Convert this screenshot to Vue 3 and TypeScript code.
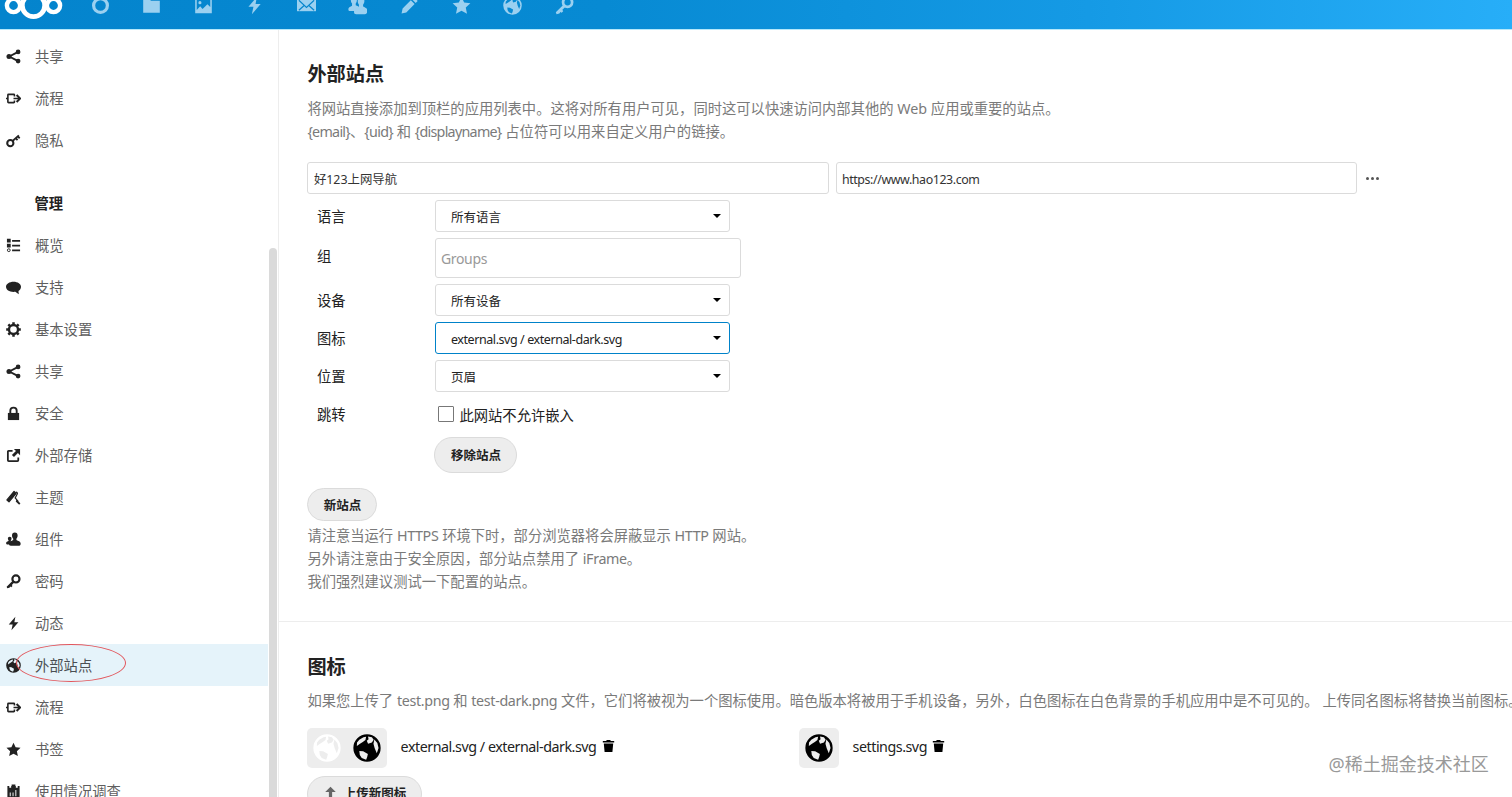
<script setup lang="ts">
import { ref } from 'vue'

interface NavItem {
  icon: string
  label: string
  active?: boolean
}

const icons: Record<string, string> = {
  circle:
    '<circle cx="8" cy="8" r="5.8" fill="none" stroke="currentColor" stroke-width="2.7"/>',
  folder: '<path d="M1 2h5l1.5 2H15v10H1z"/>',
  image:
    '<path fill-rule="evenodd" d="M1 1.5h14v13H1zM2.3 2.8v8.9l2.9-3 2 2.2 4.1-4 2.4 2.4V2.8zM5 4.3a1.3 1.3 0 1 1 0 2.6 1.3 1.3 0 0 1 0-2.6z"/>',
  bolt: '<path d="M10 0.8 2.9 9h4.2L5.8 15.3 13.2 6.7H8.9z"/>',
  mail:
    '<path d="M0 2.7h16v10.1H0z"/><path d="M1.6 3.6 8 9.6l6.4-6M1.6 12 6 8M14.4 12 10 8" fill="none" stroke="#0585cd" stroke-width="1"/>',
  users:
    '<path d="M5 .6c1.8 0 2.5 1.2 2.5 2.8 0 1.3-.4 2.2-1 2.900v1.500l2 .8c1 .5.5 2.400.5 4H2c-1.500 0-1.800-.6-1.600-2 .2-1.100 1.600-1.400 3-2.300V6.300c-.7-.7-1-1.700-1-2.900C2.400 1.800 3.200.6 5 .6z"/><path d="M11 1.300c2 0 2.800 1.300 2.800 3 0 1.300-.4 2.300-1.100 3v1.500c1.700 1 3.400 1.200 3.600 3.200.1 2-.6 3.300-2 3.300H7c-1.600 0-2.100-.9-1.900-2.500.2-1.900 2.300-2.200 4.100-4V7.300c-.7-.7-1-1.700-1-3 0-1.700.9-3 2.800-3z"/>',
  pencil:
    '<path d="m11.700 1 3.200 3.200-1.700 1.700L10 2.700zM9.100 3.600l3.200 3.200-7 7L1.300 14.700l.9-4.200z"/>',
  star: '<path d="m8 .7 2.250 4.850 5.250.6-3.900 3.600 1.050 5.300L8 12.400l-4.650 2.650 1.050-5.300L.5 6.150l5.250-.6z"/>',
  globe:
    '<path fill-rule="evenodd" d="M8 .2a7.800 7.800 0 1 0 0 15.600A7.800 7.800 0 0 0 8 .2zM3.600 3.300 6 1.800l1.500-.3-.4 1.900-1.500 1.200-1.600 1L2.200 6.800l.1-1.900zM8.600 1.400l2.200.4 1 1.500-1 1.600-2.200.6-.7-1.700 1-.8zM12.200 3.200 13.900 5.200l.7 2.800-1 3-1.200-2.800-.7-2.600zM3.600 9.700l2.200.1 2.700 1.600-.4 1.800-.6 1.500-2.500-1L3.900 12z"/>',
  key:
    '<circle cx="10.600" cy="5.300" r="3.800" fill="none" stroke="currentColor" stroke-width="2.300"/><path d="m7.100 7.300 1.800 1.800-2.700 2.500.7 1.300-1.300 1.100-1.100-.6-.8 1.300-2.400.6-.6-1.600z"/>',
  share:
    '<path d="M13 3 3.500 8l9.500 5" fill="none" stroke="currentColor" stroke-width="2"/><circle cx="3.200" cy="8" r="2.700"/><circle cx="12.900" cy="3.100" r="2.500"/><circle cx="12.900" cy="12.900" r="2.500"/>',
  flow:
    '<path d="M9 5.800V4.300Q9 3.600 8.300 3.600H2.700Q2 3.600 2 4.300v7.400q0 .7.700.7h5.600q.7 0 .7-.7V10.200M0 8h2M8 8h6.500" fill="none" stroke="currentColor" stroke-width="1.700"/><path d="m11.300 4.300 3.700 3.700-3.700 3.700" fill="none" stroke="currentColor" stroke-width="2.100"/>',
  smallkey:
    '<circle cx="4.600" cy="10.800" r="3.300" fill="none" stroke="currentColor" stroke-width="2.200"/><path d="m7 8.500 6.700-6M10.400 5.400l1.900 2.100M12.600 3.600l2 2" fill="none" stroke="currentColor" stroke-width="1.900"/>',
  list:
    '<path d="M1 .9h4v4H1zM1 6h4v4H1zM6.500 2.200H15V4H6.500zM6.500 7.200H15V9H6.500zM6.500 12.300H15V14H6.500z"/><circle cx="3" cy="13" r="1.500" fill="none" stroke="currentColor" stroke-width="1"/>',
  chat:
    '<path d="M8 1.800c4.600 0 8 2.300 8 5.500 0 2.100-1.100 3.500-2.700 4.500l.3 3.400-3.700-2.600C4.200 13.200 0 11 0 7.300c0-3.200 3.700-5.500 8-5.500z"/>',
  gear:
    '<circle cx="8" cy="8" r="4.800" fill="none" stroke="currentColor" stroke-width="2.500"/><path d="M8 .2v3M8 12.800v3M.2 8h3M12.800 8h3M2.500 2.500l2.100 2.100M11.400 11.400l2.100 2.100M13.500 2.500l-2.100 2.100M4.600 11.400l-2.100 2.100" stroke="currentColor" stroke-width="2.700"/>',
  lock:
    '<path d="M2 7.400h12V15H2z"/><path d="M4.600 7.800V5.100a3.400 3.400 0 0 1 6.800 0v2.700" fill="none" stroke="currentColor" stroke-width="2"/>',
  external:
    '<path d="M7 3H2.800Q2 3 2 3.900v9.200q0 .9.900.9h9.300q.9 0 .9-.9V10" fill="none" stroke="currentColor" stroke-width="1.900"/><path d="M8.400 1H15v6.700l-2.300-2.300-4.200 4.100-2.200-2.100 4.300-4.200z"/>',
  brush:
    '<path d="M8.600 1.600 10.800 3.600 3.200 12.600 1 10.600z" stroke="currentColor" stroke-width="1.300" stroke-linejoin="round"/><path d="M10.500 2.300q2.300.3 1.500 2L9.800 8.400l3.400 4" fill="none" stroke="currentColor" stroke-width="1.300"/><path d="m11 10.500 4.400 3.700-1.400 1.500-3.600-3.500z"/>',
  group:
    '<path d="M9.400.6c2 0 3 1.300 3 3.200 0 1.500-.5 2.500-1.300 3.300v1.500c2 1.100 4.200 1.400 4.500 3.400.2 1.900-.8 2.700-2.200 2.700H5.200c-1.500 0-2.300-.9-2-2.700.3-1.900 2.500-2.300 4.500-3.400V7.100C6.900 6.300 6.400 5.300 6.400 3.800c0-1.900 1-3.200 3-3.200z"/><path d="M4 5c1.300 0 1.900.8 1.900 2 0 .9-.2 1.400-.7 1.900v1L3 13.200H1.200C.2 13.200 0 12.400.2 11.500c.2-1.100 1.400-1.200 2.500-1.800v-.8C2.200 8.400 2 7.900 2 7c0-1.200.7-2 2-2z"/>',
  clipboard:
    '<path fill-rule="evenodd" d="M1.500 2h2v2h2V2H6V.5h4V2h.500v2h2V2h2v13h-13zM4 7v6h1V9H4zM7 9v4h1V9zM10 6.500V13h1V6.500z"/>',
  trash: '<path d="M5.800.5h4.400l.6 1.200h4.200v2H1v-2h4.200zM2.200 5h11.600l-1 10.500H3.200z"/>',
  upload: '<path d="m8 1 6.500 6.500H10V15H6V7.500H1.500z"/>',
}

const apps: string[] = ['circle', 'folder', 'image', 'bolt', 'mail', 'users', 'pencil', 'star', 'globe', 'key']

const personal: NavItem[] = [
  { icon: 'share', label: '共享' },
  { icon: 'flow', label: '流程' },
  { icon: 'smallkey', label: '隐私' },
]

const admin: NavItem[] = [
  { icon: 'list', label: '概览' },
  { icon: 'chat', label: '支持' },
  { icon: 'gear', label: '基本设置' },
  { icon: 'share', label: '共享' },
  { icon: 'lock', label: '安全' },
  { icon: 'external', label: '外部存储' },
  { icon: 'brush', label: '主题' },
  { icon: 'group', label: '组件' },
  { icon: 'key', label: '密码' },
  { icon: 'bolt', label: '动态' },
  { icon: 'globe', label: '外部站点', active: true },
  { icon: 'flow', label: '流程' },
  { icon: 'star', label: '书签' },
  { icon: 'clipboard', label: '使用情况调查' },
]

const siteName = ref('好123上网导航')
const siteUrl = ref('https://www.hao123.com')
</script>

<template>
  <div class="page">
    <header class="topbar">
      <svg class="logo" viewBox="0 0 70 29" fill="none" stroke="#fff">
        <circle cx="13.500" cy="5.500" r="6.600" stroke-width="4.400" />
        <circle cx="33.500" cy="5.500" r="11.200" stroke-width="4.800" />
        <circle cx="53.500" cy="5.500" r="6.600" stroke-width="4.400" />
      </svg>
      <nav class="apps">
        <svg v-for="a in apps" :key="a" class="app" viewBox="0 0 16 16" v-html="icons[a]" />
      </nav>
    </header>

    <div class="body">
      <aside class="sidebar">
        <ul class="nav">
          <li v-for="(n, i) in personal" :key="i" class="item">
            <svg class="ico" viewBox="0 0 16 16" v-html="icons[n.icon]" />
            <span>{{ n.label }}</span>
          </li>
        </ul>
        <h3 class="caption">管理</h3>
        <ul class="nav">
          <li v-for="(n, i) in admin" :key="i" class="item" :class="{ active: n.active }">
            <svg class="ico" viewBox="0 0 16 16" v-html="icons[n.icon]" />
            <span>{{ n.label }}</span>
            <i v-if="n.active" class="mark"></i>
          </li>
        </ul>
        <div class="thumb"></div>
      </aside>

      <main class="content">
        <section class="section sites">
          <h2>外部站点</h2>
          <p class="hint">将网站直接添加到顶栏的应用列表中。这将对所有用户可见，同时这可以快速访问内部其他的 Web 应用或重要的站点。</p>
          <p class="hint"><span class="en">{email}</span>、<span class="en">{uid}</span> 和 <span class="en">{displayname}</span> 占位符可以用来自定义用户的链接。</p>

          <div class="urls">
            <input v-model="siteName" class="field" type="text" />
            <input v-model="siteUrl" class="field url" type="text" />
            <span class="more"><b></b><b></b><b></b></span>
          </div>

          <div class="options">
            <label>语言</label>
            <div class="select">所有语言<i class="caret"></i></div>
            <label class="up">组</label>
            <div class="groups">Groups</div>
            <label>设备</label>
            <div class="select">所有设备<i class="caret"></i></div>
            <label>图标</label>
            <div class="select focus"><span>external.svg / external-dark.svg</span><i class="caret"></i></div>
            <label>位置</label>
            <div class="select">页眉<i class="caret"></i></div>
            <label>跳转</label>
            <div class="check"><i class="box"></i>此网站不允许嵌入</div>
          </div>
          <button class="pill remove">移除站点</button>
          <button class="pill add">新站点</button>

          <p class="hint">请注意当运行 <span class="caps">HTTPS</span> 环境下时，部分浏览器将会屏蔽显示 <span class="caps">HTTP</span> 网站。</p>
          <p class="hint">另外请注意由于安全原因，部分站点禁用了 <span class="caps">iFrame</span>。</p>
          <p class="hint">我们强烈建议测试一下配置的站点。</p>
        </section>

        <section class="section uploads">
          <h2>图标</h2>
          <p class="hint">如果您上传了 <span class="file">test.png</span> 和 <span class="file">test-dark.png</span> 文件，它们将被视为一个图标使用。暗色版本将被用于手机设备，另外，白色图标在白色背景的手机应用中是不可见的。 上传同名图标将替换当前图标。</p>
          <div class="icons">
            <div class="entry">
              <div class="tile">
                <svg class="globe light" viewBox="0 0 16 16" v-html="icons.globe" />
                <svg class="globe" viewBox="0 0 16 16" v-html="icons.globe" />
              </div>
              <span class="name">external.svg / external-dark.svg</span>
              <svg class="trash" viewBox="0 0 16 16" v-html="icons.trash" />
            </div>
            <div class="entry">
              <div class="tile">
                <svg class="globe" viewBox="0 0 16 16" v-html="icons.globe" />
              </div>
              <span class="name">settings.svg</span>
              <svg class="trash" viewBox="0 0 16 16" v-html="icons.trash" />
            </div>
          </div>
          <button class="pill upload">
            <svg viewBox="0 0 16 16" v-html="icons.upload" />上传新图标
          </button>
        </section>
      </main>
    </div>
    <div class="watermark">@稀土掘金技术社区</div>
  </div>
</template>

<style>
body {
  overflow: hidden;
}
</style>

<style scoped>
.page {
  position: relative;
  width: 1512px;
  height: 797px;
  overflow: hidden;
  background: #fff;
  color: #222;
  font-family: 'Noto Sans', 'Noto Sans CJK SC', sans-serif;
  font-size: 14.3px;
  display: flex;
  flex-direction: column;
}
svg {
  fill: currentColor;
  flex: none;
}
h2,
h3,
p,
ul {
  margin: 0;
  padding: 0;
  list-style: none;
}
.topbar {
  height: 29px;
  flex: none;
  display: flex;
  background: linear-gradient(90deg, #0484cd 0%, #078ad3 40%, #159ae5 72%, #27aef8 100%);
  border-bottom: 1px solid #b5e8fb;
  overflow: hidden;
}
.logo {
  width: 70px;
  height: 29px;
  fill: none;
}
.apps {
  display: flex;
  gap: 32.600px;
  margin: -4px 0 0 20.500px;
  color: #9bd0f0;
}
.app {
  width: 19px;
  height: 19px;
}
.body {
  flex: 1;
  display: flex;
  min-height: 0;
}
.sidebar {
  position: relative;
  width: 278px;
  flex: none;
  padding-top: 5px;
  border-right: 1px solid #ededed;
  overflow: hidden;
}
.item {
  position: relative;
  display: flex;
  align-items: center;
  gap: 14px;
  width: 262px;
  height: 42px;
  padding-left: 6px;
  color: #222;
}
.item span {
  padding-bottom: 2px;
  color: #5f5f5f;
}
.item.active {
  background: #e5f3fa;
}
.item.active span {
  color: #4a4f52;
}
.ico {
  width: 15px;
  height: 15px;
}
.mark {
  position: absolute;
  left: 16px;
  top: 0;
  width: 108px;
  height: 36px;
  border: 1px solid #e2565c;
  border-radius: 50%;
}
.caption {
  height: 42px;
  margin-top: 21px;
  padding-left: 34.500px;
  font-size: 14.300px;
  line-height: 43px;
}
.thumb {
  position: absolute;
  right: 1px;
  top: 218px;
  width: 8px;
  height: 600px;
  border-radius: 4px;
  background: #dadada;
}
.content {
  flex: 1;
  min-width: 0;
  overflow: hidden;
  white-space: nowrap;
}
.section {
  padding-left: 28.400px;
}
.sites {
  height: 591px;
  border-bottom: 1px solid #ededed;
}
h2 {
  padding-top: 29px;
  font-size: 19.200px;
  line-height: 30px;
  margin-bottom: 8px;
}
.hint {
  line-height: 23px;
  color: #7a7a7a;
}
.en {
  letter-spacing: -0.72px;
}
.caps {
  letter-spacing: -0.35px;
}
.file {
  letter-spacing: -0.35px;
}
.urls {
  display: flex;
  align-items: center;
  gap: 7px;
  margin-top: 19px;
}
.field {
  box-sizing: border-box;
  width: 521.500px;
  height: 32px;
  margin: 0;
  padding: 1px 5.500px 0;
  border: 1px solid #dbdbdb;
  border-radius: 3px;
  outline: none;
  background: #fff;
  color: #333;
  font: 12.400px 'Noto Sans', 'Noto Sans CJK SC', sans-serif;
}
.url {
  padding: 2px 5px 0;
  letter-spacing: -0.4px;
}
.more {
  display: flex;
  gap: 2px;
  margin-left: 2px;
}
.more b {
  width: 3px;
  height: 3px;
  border-radius: 50%;
  background: #555;
}
.options {
  display: grid;
  grid-template-columns: 118px auto;
  grid-template-rows: 32px 40px repeat(4, 32px);
  justify-content: start;
  align-items: center;
  row-gap: 6.100px;
  padding: 6px 0 0 9.600px;
}
.options label {
  padding-bottom: 1px;
}
.options .up {
  padding-bottom: 5px;
}
.select {
  box-sizing: border-box;
  display: flex;
  align-items: center;
  justify-content: space-between;
  width: 295px;
  height: 32px;
  padding: 0 8px 0 15px;
  border: 1px solid #dbdbdb;
  border-radius: 3px;
  font-size: 12.500px;
}
.select.focus {
  border-color: #0082c9;
  letter-spacing: -0.43px;
}
.focus span {
  padding-top: 2px;
}
.caret {
  border: 4px solid transparent;
  border-top: 4.500px solid #000;
  border-bottom: 0;
}
.groups {
  box-sizing: border-box;
  width: 306px;
  height: 40px;
  padding-left: 5px;
  border: 1px solid #dbdbdb;
  border-radius: 3px;
  line-height: 39px;
  font-size: 14px;
  letter-spacing: -0.35px;
  color: #999;
}
.check {
  display: flex;
  align-items: center;
  gap: 5.500px;
  height: 32px;
  padding-left: 3px;
}
.box {
  box-sizing: border-box;
  width: 16px;
  height: 16px;
  border: 1px solid #777;
  border-radius: 1px;
}
.pill {
  display: flex;
  align-items: center;
  justify-content: center;
  box-sizing: border-box;
  margin: 0;
  padding: 0;
  border: 1px solid #dbdbdb;
  border-radius: 20px;
  background: #ededed;
  color: #222;
  font: bold 12.500px 'Noto Sans', 'Noto Sans CJK SC', sans-serif;
}
.remove {
  width: 83px;
  height: 36px;
  margin: 6.500px 0 15px 127px;
}
.add {
  width: 70px;
  height: 33px;
  margin-bottom: 3px;
}
.uploads h2 {
  padding-top: 30px;
  margin-bottom: 7px;
}
.icons {
  display: flex;
  margin-top: 16px;
}
.entry {
  display: flex;
  align-items: center;
  width: 492px;
}
.tile {
  display: flex;
  align-items: center;
  gap: 12px;
  height: 40px;
  padding: 0 6px;
  border-radius: 5px;
  background: #ededed;
}
.globe {
  width: 28px;
  height: 28px;
  color: #000;
}
.light {
  color: #fff;
}
.name {
  margin-left: 13.200px;
  padding-bottom: 3px;
  letter-spacing: -0.48px;
}
.trash {
  width: 13px;
  height: 14px;
  margin: 0 0 4px 5.500px;
  color: #000;
}
.upload {
  gap: 7px;
  width: 115px;
  height: 36px;
  margin-top: 8px;
  padding-bottom: 3px;
}
.upload svg {
  width: 13px;
  height: 13px;
  color: #666;
}
.watermark {
  position: absolute;
  left: 1328.500px;
  top: 751px;
  font-size: 18px;
  line-height: 26px;
  color: #999;
}
</style>
